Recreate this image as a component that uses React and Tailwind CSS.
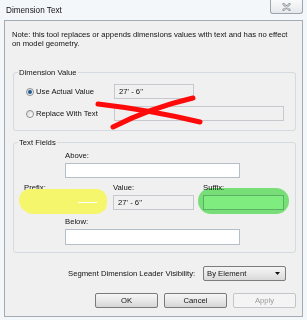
import React from "react";

const Radio = ({ checked }) => (
  <span className="flex h-[8px] w-[8px] shrink-0 items-center justify-center rounded-full border border-[#8c8f92] bg-linear-to-br from-[#d8d8d8] to-[#ffffff]">
    {checked && <span className="h-[4px] w-[4px] rounded-full bg-[#1d5a95]" />}
  </span>
);

const TextBox = ({ className = "", disabled, value }) => (
  <div
    className={`flex h-[15px] items-center pl-[4px] ${
      disabled ? "border border-[#c5c8cc] bg-[#f0f0f0]" : "border border-[#b4bfca] bg-white"
    } ${className}`}
  >
    {value}
  </div>
);

const GroupBox = ({ title, className = "", children }) => (
  <div className={`rounded-[3px] border border-[#d4dadf] ${className}`}>
    <span className="-mt-[5px] ml-[4px] block w-fit bg-[#f0f0f0] px-[1px] leading-[9px]">{title}</span>
    {children}
  </div>
);

const Button = ({ children, disabled }) => (
  <button
    type="button"
    className={`flex h-[15px] w-[63px] items-center justify-center rounded-[2px] border ${
      disabled
        ? "border-[#c2c6ca] bg-[#f4f4f4] text-[#9a9a9a]"
        : "border-[#7a7a7a] bg-linear-to-b from-[#f6f6f6] via-[#e8e8e8] to-[#d6d6d6]"
    }`}
  >
    {children}
  </button>
);

export default function App() {
  return (
    <div className="relative h-[320px] w-[307px] overflow-hidden bg-[#f4f7fa] font-['Liberation_Sans',Arial,sans-serif] text-[7.7px] leading-[9px] text-[#111]">
      <div className="flex h-[20px] items-start justify-between">
        <span className="ml-[6px] mt-[6px] text-[8.2px]">Dimension Text</span>
        <button
          type="button"
          className="mr-[4px] flex h-[14px] w-[33px] items-center justify-center rounded-b-[3px] border border-t-0 border-[#9aa4ae] bg-linear-to-b from-[#f8f9fa] to-[#e6e9ec]"
        >
          <svg width="9" height="8" viewBox="0 0 9 8">
            <path d="M1.5 1 L7.5 7 M7.5 1 L1.5 7" stroke="#8e969e" strokeWidth="2.4" strokeLinecap="round" />
            <path d="M1.5 1 L7.5 7 M7.5 1 L1.5 7" stroke="#eef0f2" strokeWidth="0.9" strokeLinecap="round" />
          </svg>
        </button>
      </div>

      <div className="ml-[4px] h-[297px] w-[299px] border border-[#a3abb4] bg-[#f0f0f0] pl-[8px] pr-[6px]">
        <p className="-ml-[1px] pt-[9px]">
          Note: this tool replaces or appends dimensions values with text and has no effect
          <br />
          on model geometry.
        </p>

        <GroupBox title="Dimension Value" className="mt-[24px] pb-[9px]">
          <div className="mt-[7px] flex h-[15px] items-center">
            <div className="flex w-[100px] shrink-0 items-center gap-[2px] pl-[12px]">
              <Radio checked />
              <span>Use Actual Value</span>
            </div>
            <TextBox disabled value={"27' - 6\""} className="w-[80px]" />
          </div>
          <div className="mt-[7px] flex h-[15px] items-center">
            <div className="flex w-[100px] shrink-0 items-center gap-[2px] pl-[12px]">
              <Radio />
              <span>Replace With Text</span>
            </div>
            <TextBox disabled className="w-[170px]" />
          </div>
        </GroupBox>

        <GroupBox title="Text Fields" className="mt-[11px] pb-[7px]">
          <div className="ml-[51px] mt-[4px]">
            <span className="block">Above:</span>
            <TextBox className="mt-[3px] w-[175px]" />
          </div>
          <div className="mt-[5px] grid grid-cols-[80px_81px_81px] gap-x-[9px] pl-[10px]">
            <div>
              <span className="block">Prefix:</span>
              <TextBox className="mt-[3px]" />
            </div>
            <div>
              <span className="block">Value:</span>
              <TextBox disabled value={"27' - 6\""} className="mt-[3px]" />
            </div>
            <div>
              <span className="block">Suffix:</span>
              <TextBox className="mt-[3px]" />
            </div>
          </div>
          <div className="ml-[51px] mt-[7px]">
            <span className="block">Below:</span>
            <TextBox className="mt-[3px] h-[16px] w-[175px]" />
          </div>
        </GroupBox>

        <div className="mt-[13px] flex h-[15px] items-center pr-[10px]">
          <span className="ml-[55px]">Segment Dimension Leader Visibility:</span>
          <div className="ml-auto flex h-[15px] w-[83px] items-center justify-between rounded-[2px] border border-[#7c7c7c] bg-linear-to-b from-[#f4f4f4] via-[#e9e9e9] to-[#d9d9d9] pl-[3px] pr-[5px]">
            <span>By Element</span>
            <svg width="5" height="3" viewBox="0 0 5 3">
              <path d="M0 0 H5 L2.5 3 Z" fill="#111" />
            </svg>
          </div>
        </div>

        <div className="mt-[12px] flex justify-end gap-[6px]">
          <Button>OK</Button>
          <Button>Cancel</Button>
          <Button disabled>Apply</Button>
        </div>
      </div>

      {/* highlighter marks and the red cross drawn over the dialog */}
      <div className="pointer-events-none absolute left-[19px] top-[189px] h-[25px] w-[88px] rounded-[12px] rounded-bl-[16px] bg-[#f6f66c]" />
      <div className="pointer-events-none absolute left-[78px] top-[202px] h-[1px] w-[19px] bg-white" />
      <div className="pointer-events-none absolute left-[198px] top-[188px] h-[26px] w-[91px] rounded-[13px] bg-[#7fec7f] mix-blend-multiply" />
      <svg className="pointer-events-none absolute left-0 top-0" width="307" height="320" viewBox="0 0 307 320">
        <path d="M98 104 Q150 110 200 122" stroke="#ff0a0a" strokeWidth="5" strokeLinecap="round" fill="none" />
        <path d="M193 98 Q150 108 113 127" stroke="#ff0a0a" strokeWidth="5" strokeLinecap="round" fill="none" />
      </svg>
    </div>
  );
}
